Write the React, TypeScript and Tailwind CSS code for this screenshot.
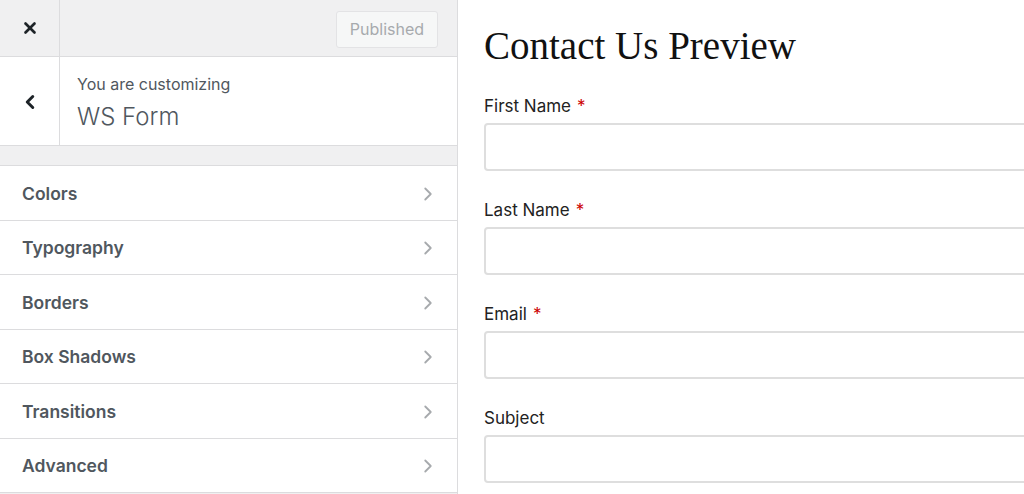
import { LuChevronLeft, LuChevronRight, LuX } from 'react-icons/lu';

const sections = ['Colors', 'Typography', 'Borders', 'Box Shadows', 'Transitions', 'Advanced'];

const fields = [
  { label: 'First Name', required: true },
  { label: 'Last Name', required: true },
  { label: 'Email', required: true },
  { label: 'Subject', required: false },
];

export default function App() {
  return (
    <div className="flex h-[494px] w-[1024px] overflow-hidden bg-white font-['Inter',sans-serif]">
      <aside className="flex w-[458px] shrink-0 flex-col border-r border-[#dcdcde] bg-[#f0f0f1]">
        <div className="flex h-[57px] shrink-0 border-b border-[#dcdcde]">
          <button className="flex w-[60px] items-center justify-center border-r border-[#dcdcde] text-[#1d2327]">
            <LuX size={18} strokeWidth={3.5} />
          </button>
          <div className="flex flex-1 items-center justify-end pr-[19px] pt-[2px]">
            <span className="flex h-[37px] w-[102px] items-center justify-center rounded-[3px] border border-[#e3e3e5] bg-[#f6f7f7] text-[16px] text-[#a7aaad]">
              Published
            </span>
          </div>
        </div>

        <div className="flex h-[89px] shrink-0 border-b border-[#dcdcde] bg-white">
          <button className="flex w-[60px] items-center justify-center border-r border-[#dcdcde] pt-[1px] text-[#1d2327]">
            <LuChevronLeft size={22} strokeWidth={3.25} />
          </button>
          <div className="flex flex-col justify-center pl-[17px] pt-[2px]">
            <span className="text-[16px] leading-[20px] text-[#50575e]">You are customizing</span>
            <span className="mt-[9px] text-[24px] leading-[28px] font-light text-[#50575e]">WS Form</span>
          </div>
        </div>

        <div className="h-[19px] shrink-0" />

        <ul className="flex flex-col border-t border-[#dcdcde]">
          {sections.map((s) => (
            <li
              key={s}
              className="flex h-[54.5px] items-center justify-between border-b border-[#dcdcde] bg-white pl-[22px] pr-[18px] pt-[2px]"
            >
              <span className="text-[17.5px] font-semibold text-[#50575e]">{s}</span>
              <LuChevronRight size={22} strokeWidth={2} className="text-[#a7aaad]" />
            </li>
          ))}
        </ul>
      </aside>

      <main className="flex-1 pl-[26px] pt-[24px]">
        <h1 className="font-['Liberation_Serif',serif] text-[39px] leading-[44px] text-[#111]">Contact Us Preview</h1>
        <div className="mt-[26px] flex flex-col gap-[27px]">
          {fields.map((f) => (
            <div key={f.label} className="flex flex-col">
              <label className="h-[29px] text-[17px] leading-[24px] text-[#222]">
                {f.label}
                {f.required && <span className="ml-[6px] text-[#c00]">*</span>}
              </label>
              <div className="h-[48px] w-[600px] rounded-[4px] border-2 border-[#dedede] bg-white" />
            </div>
          ))}
        </div>
      </main>
    </div>
  );
}
